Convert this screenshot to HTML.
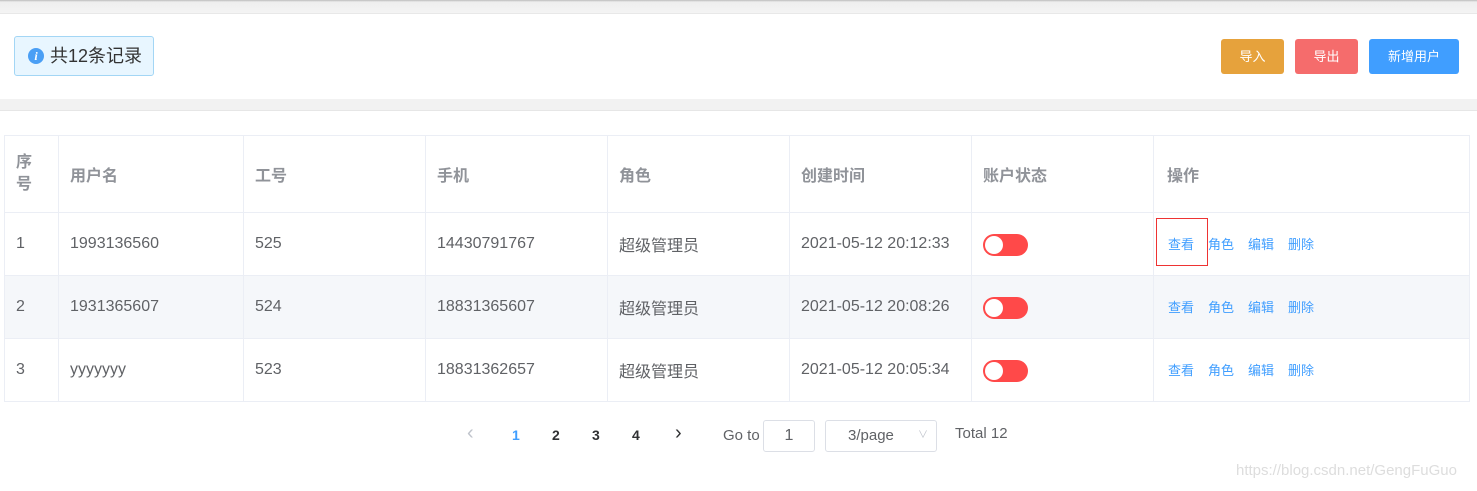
<!DOCTYPE html>
<html><head><meta charset="utf-8"><style>
*{margin:0;padding:0;box-sizing:border-box}
body{width:1477px;height:491px;background:#fff;font-family:"Liberation Sans","Noto Sans CJK SC",sans-serif;position:relative;overflow:hidden;color:#606266}
.abs{position:absolute}
.top{left:0;top:0;width:1477px;height:13px;background:linear-gradient(#bbb 0,#eee 2px,#f4f4f4 100%)}
.card{left:0;top:13px;width:1477px;height:86px;background:#fff;border-top:1px solid #e8e8e8}
.strip{left:0;top:99px;width:1477px;height:12px;background:#f2f2f2;border-bottom:1px solid #e6e6e6}
.tag{left:14px;top:36px;width:140px;height:40px;background:#e8f6ff;border:1px solid #a3d6f5;border-radius:3px;font-size:18px;color:#333;line-height:38px;padding-left:35px}
.tag i{position:absolute;left:13px;top:11px;width:16px;height:16px;border-radius:50%;background:#4a9ff5;color:#fff;font-size:12px;line-height:16px;text-align:center;font-style:italic;font-weight:bold;font-family:"Liberation Serif",serif}
.btn{top:39px;height:35px;border-radius:3px;color:#fff;font-size:13px;text-align:center;line-height:35px}
table{position:absolute;left:4px;top:135px;border-collapse:collapse;font-size:16px}
td{border:1px solid #ebeef5;padding-left:11px;height:63px;vertical-align:middle}
tr.h td{height:77px;color:#909399;font-weight:bold;font-size:16px}
tr.g td{background:#f5f7fa}
.sw{display:inline-block;width:45px;height:22px;border-radius:11px;background:#ff4949;position:relative;top:3px}
.sw:after{content:"";position:absolute;left:2px;top:2px;width:18px;height:18px;border-radius:50%;background:#fff}
.op span{color:#409eff;font-size:13px;margin-right:14px}
.pg{top:420px;font-size:14px;line-height:30px;height:30px}
</style></head><body>
<div class="abs top"></div>
<div class="abs card"></div>
<div class="abs strip"></div>
<div class="abs tag"><i>i</i>共12条记录</div>
<div class="abs btn" style="left:1221px;width:63px;background:#e6a23c">导入</div>
<div class="abs btn" style="left:1295px;width:63px;background:#f56c6c">导出</div>
<div class="abs btn" style="left:1369px;width:90px;background:#409eff">新增用户</div>
<table>
<colgroup><col style="width:54px"><col style="width:185px"><col style="width:182px"><col style="width:182px"><col style="width:182px"><col style="width:182px"><col style="width:182px"><col style="width:316px"></colgroup>
<tr class="h"><td style="line-height:22px">序<br>号</td><td>用户名</td><td>工号</td><td>手机</td><td>角色</td><td>创建时间</td><td>账户状态</td><td style="padding-left:13px">操作</td></tr>
<tr><td>1</td><td>1993136560</td><td>525</td><td>14430791767</td><td>超级管理员</td><td>2021-05-12 20:12:33</td><td><span class="sw"></span></td><td class="op" style="padding-left:14px;position:relative"><span>查看</span><span>角色</span><span>编辑</span><span>删除</span><div style="position:absolute;left:2px;top:5px;width:52px;height:48px;border:1px solid #e33"></div></td></tr>
<tr class="g"><td>2</td><td>1931365607</td><td>524</td><td>18831365607</td><td>超级管理员</td><td>2021-05-12 20:08:26</td><td><span class="sw"></span></td><td class="op" style="padding-left:14px"><span>查看</span><span>角色</span><span>编辑</span><span>删除</span></td></tr>
<tr><td>3</td><td>yyyyyyy</td><td>523</td><td>18831362657</td><td>超级管理员</td><td>2021-05-12 20:05:34</td><td><span class="sw"></span></td><td class="op" style="padding-left:14px"><span>查看</span><span>角色</span><span>编辑</span><span>删除</span></td></tr>
</table>
<div class="abs pg" style="left:467px;color:#c0c4cc;font-size:20px;top:418px">‹</div>
<div class="abs pg" style="left:512px;color:#409eff;font-weight:bold">1</div>
<div class="abs pg" style="left:552px;color:#303133;font-weight:bold">2</div>
<div class="abs pg" style="left:592px;color:#303133;font-weight:bold">3</div>
<div class="abs pg" style="left:632px;color:#303133;font-weight:bold">4</div>
<div class="abs pg" style="left:675px;color:#303133;font-size:20px;top:418px">›</div>
<div class="abs pg" style="left:723px;font-size:15px;top:421px">Go to</div>
<div class="abs" style="left:763px;top:420px;width:52px;height:32px;border:1px solid #dcdfe6;border-radius:3px;text-align:center;line-height:30px;font-size:16px">1</div>
<div class="abs" style="left:825px;top:420px;width:112px;height:32px;border:1px solid #dcdfe6;border-radius:3px;line-height:30px;font-size:15px;padding-left:22px">3/page<span style="position:absolute;right:8px;top:0;color:#c0c4cc;font-size:10px">∨</span></div>
<div class="abs pg" style="left:955px;font-size:15px;top:419px">Total 12</div>
<div class="abs" style="left:1236px;top:462px;font-size:15px;color:#ddd">https://blog.csdn.net/GengFuGuo</div>
</body></html>
